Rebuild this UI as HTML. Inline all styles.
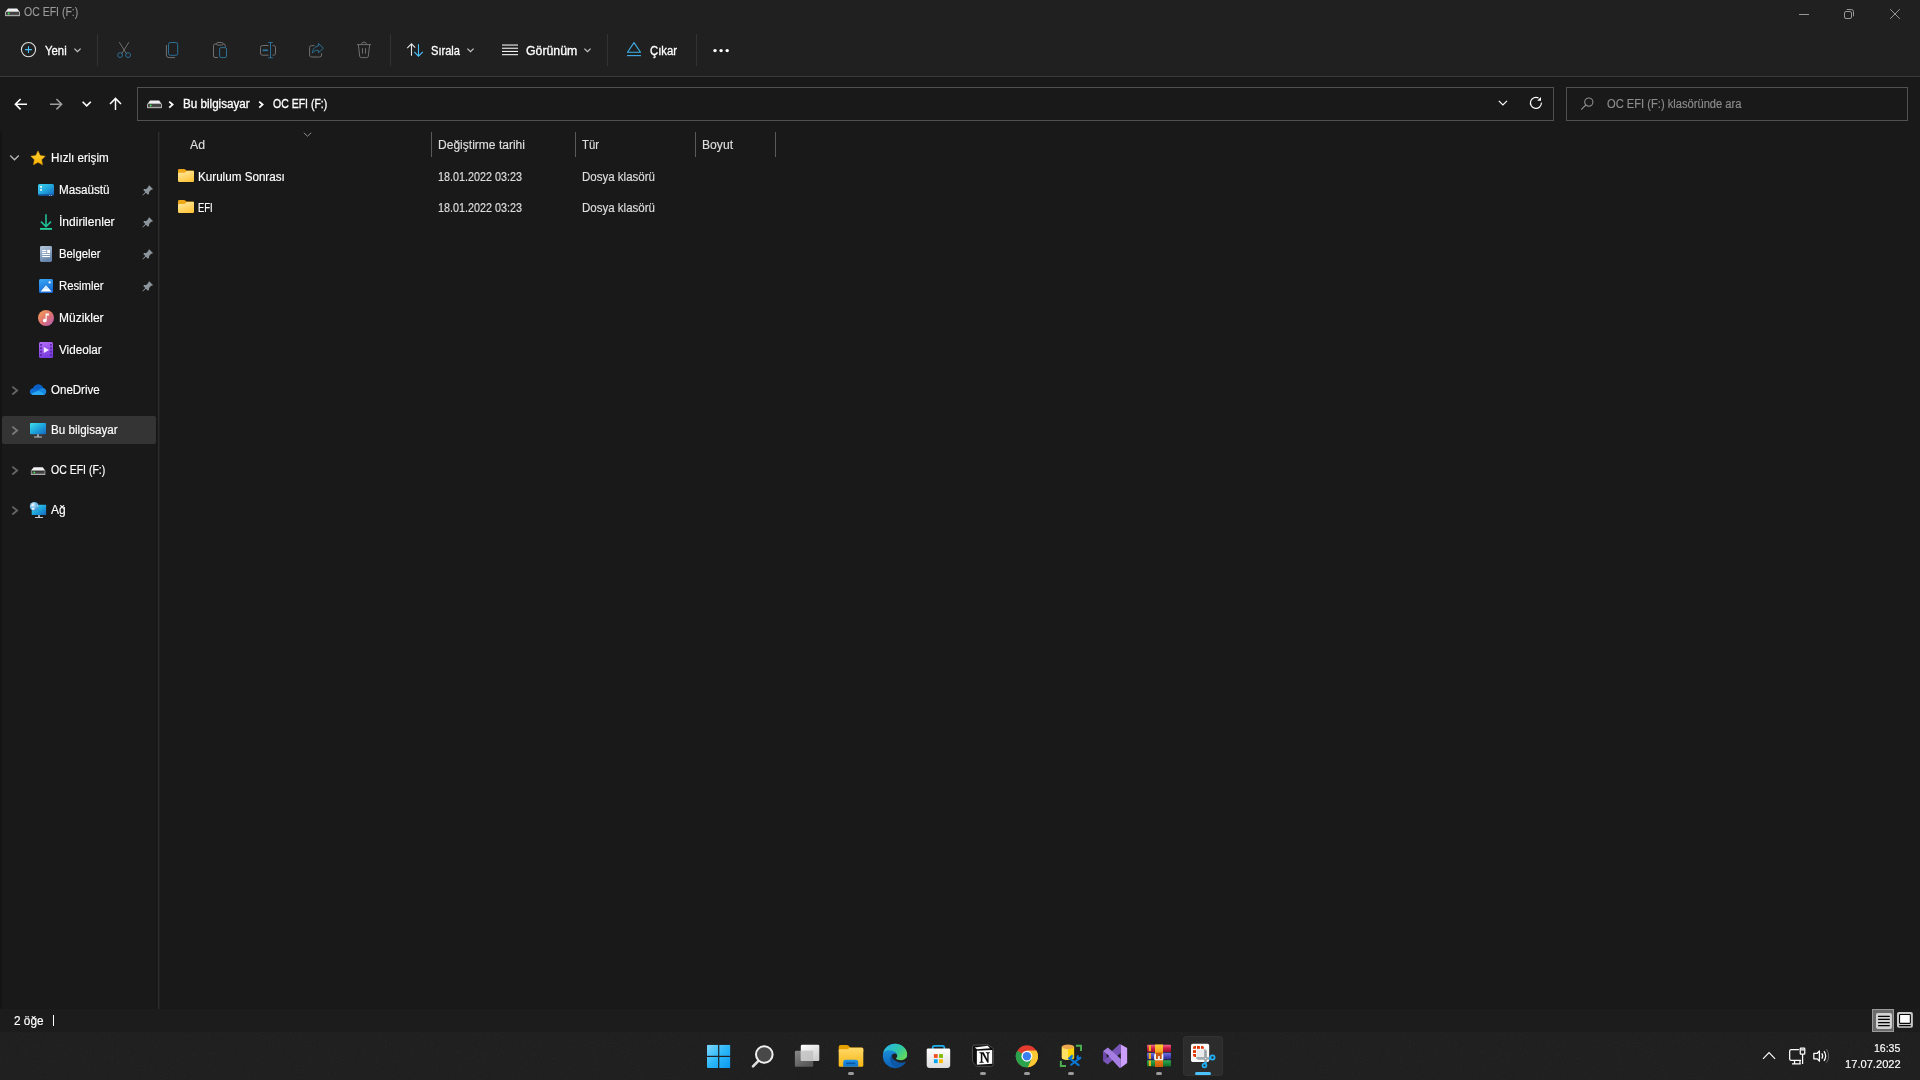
<!DOCTYPE html>
<html lang="tr">
<head>
<meta charset="utf-8">
<title>OC EFI (F:)</title>
<style>
html,body{margin:0;padding:0;}
body{width:1920px;height:1080px;overflow:hidden;background:#191919;position:relative;
  font-family:"Liberation Sans",sans-serif;font-size:12px;color:#fff;}
.a{position:absolute;}
.t{position:absolute;white-space:nowrap;font-size:12px;line-height:16px;color:#fff;
  transform-origin:0 50%;display:block;}
.t{-webkit-text-stroke:0.16px currentColor;}
.t.tb{-webkit-text-stroke:0.3px currentColor;}
.t.gray{color:#9a9a9a;-webkit-text-stroke:0.1px currentColor;}
.t.srch{color:#8c8c8c;}
.t.hdr{color:#dedede;}
.t.cell{color:#dedede;}
.t.clk{font-size:11.6px;}
svg{position:absolute;overflow:visible;}
/* regions */
#top{left:0;top:0;width:1920px;height:76px;background:#202020;}
#topline{left:0;top:76px;width:1920px;height:1px;background:#3a3a3a;}
#edge{left:0;top:132px;width:2px;height:877px;background:#141414;}
#addr{left:137px;top:87px;width:1415px;height:32px;border:1px solid #515151;}
#search{left:1566px;top:87px;width:340px;height:32px;border:1px solid #515151;}
#sidediv{left:158px;top:132px;width:1px;height:877px;background:#2c2c2c;box-shadow:1px 0 0 #202020,-2px 0 0 #161616;}
#sel{left:2px;top:416px;width:154px;height:28px;background:#343434;border-radius:2px;}
.sep{position:absolute;top:34px;width:1px;height:32px;background:#333333;}
.colsep{position:absolute;top:132px;width:1px;height:25px;background:#5a5a5a;}
#status{left:0;top:1009px;width:1920px;height:23px;background:#1c1c1c;}
#task{left:0;top:1032px;width:1920px;height:48px;background:#1f1f1f;}
.ind{top:1072px;width:6px;height:3px;border-radius:1.5px;background:#9b9b9b;}
</style>
</head>
<body>
<!-- ===== backgrounds ===== -->
<div class="a" id="top"></div>
<div class="a" id="topline"></div>
<div class="a" id="edge"></div>
<div class="a" id="addr"></div>
<div class="a" id="search"></div>
<div class="a" id="sidediv"></div>
<div class="a" id="sel"></div>
<div class="sep" style="left:97px"></div>
<div class="sep" style="left:390px"></div>
<div class="sep" style="left:607px"></div>
<div class="sep" style="left:696px"></div>
<div class="colsep" style="left:431px"></div>
<div class="colsep" style="left:575px"></div>
<div class="colsep" style="left:695px"></div>
<div class="colsep" style="left:775px"></div>
<div class="a" id="status"></div>
<div class="a" id="task"></div>
<svg style="left:0px;top:1032px" width="1920" height="48"><filter id="nz" x="0" y="0" width="100%" height="100%"><feTurbulence type="fractalNoise" baseFrequency="0.75" numOctaves="2" seed="7" result="n"/><feColorMatrix in="n" type="matrix" values="0 0 0 0 1  0 0 0 0 1  0 0 0 0 1  0.6 0.6 0.6 0 -0.82"/></filter><rect width="1920" height="48" fill="#fff" filter="url(#nz)" opacity="0.06"/></svg>

<!-- ===== text ===== -->
<span class="t gray" style="left:24.1px;top:3.84px;transform:scaleX(0.8758)">OC EFI (F:)</span>
<span class="t tb" style="left:45px;top:42.64px;transform:scaleX(0.9467)">Yeni</span>
<span class="t tb" style="left:431px;top:42.64px;transform:scaleX(0.9248)">Sırala</span>
<span class="t tb" style="left:526px;top:42.64px;transform:scaleX(1.0254)">Görünüm</span>
<span class="t tb" style="left:650px;top:42.64px;transform:scaleX(0.9417)">Çıkar</span>
<span class="t tb" style="left:183.3px;top:95.84px;transform:scaleX(0.9708)">Bu bilgisayar</span>
<span class="t tb" style="left:273.3px;top:95.84px;transform:scaleX(0.8742)">OC EFI (F:)</span>
<span class="t srch" style="left:1607.2px;top:95.84px;transform:scaleX(0.9294)">OC EFI (F:) klasöründe ara</span>

<span class="t " style="left:51.3px;top:149.84px;transform:scaleX(0.9723)">Hızlı erişim</span>
<span class="t " style="left:59.4px;top:181.64px;transform:scaleX(0.9725)">Masaüstü</span>
<span class="t " style="left:59.4px;top:213.64px;transform:scaleX(1.0043)">İndirilenler</span>
<span class="t " style="left:59.4px;top:245.64px;transform:scaleX(0.9448)">Belgeler</span>
<span class="t " style="left:59.4px;top:277.64px;transform:scaleX(0.9420)">Resimler</span>
<span class="t " style="left:59.4px;top:309.64px;transform:scaleX(0.9984)">Müzikler</span>
<span class="t " style="left:59.4px;top:341.64px;transform:scaleX(0.9723)">Videolar</span>
<span class="t " style="left:51.3px;top:381.84px;transform:scaleX(0.9608)">OneDrive</span>
<span class="t " style="left:51.3px;top:421.84px;transform:scaleX(0.9708)">Bu bilgisayar</span>
<span class="t " style="left:51.3px;top:461.84px;transform:scaleX(0.8758)">OC EFI (F:)</span>
<span class="t " style="left:51.3px;top:501.84px;transform:scaleX(1.0009)">Ağ</span>

<span class="t hdr" style="left:190px;top:137.14px;transform:scaleX(1.0213)">Ad</span>
<span class="t hdr" style="left:438px;top:137.14px;transform:scaleX(1.0034)">Değiştirme tarihi</span>
<span class="t hdr" style="left:582px;top:137.14px;transform:scaleX(0.9444)">Tür</span>
<span class="t hdr" style="left:702px;top:137.14px;transform:scaleX(1.0102)">Boyut</span>
<span class="t " style="left:198.2px;top:168.84px;transform:scaleX(0.9712)">Kurulum Sonrası</span>
<span class="t " style="left:198.2px;top:199.84px;transform:scaleX(0.7873)">EFI</span>
<span class="t cell" style="left:438px;top:168.84px;transform:scaleX(0.8991)">18.01.2022 03:23</span>
<span class="t cell" style="left:438px;top:199.84px;transform:scaleX(0.8991)">18.01.2022 03:23</span>
<span class="t cell" style="left:582px;top:168.84px;transform:scaleX(0.9601)">Dosya klasörü</span>
<span class="t cell" style="left:582px;top:199.84px;transform:scaleX(0.9601)">Dosya klasörü</span>

<span class="t " style="left:14px;top:1012.84px;transform:scaleX(0.9823)">2 öğe</span>
<span class="t clk" style="left:1874px;top:1039.88px;transform:scaleX(0.9064)">16:35</span>
<span class="t clk" style="left:1844.6px;top:1056.08px;transform:scaleX(0.9598)">17.07.2022</span>

<!-- ===== ICONS: titlebar/toolbar ===== -->
<!-- title drive icon -->
<svg width="0" height="0" style="left:0;top:0"><defs>
  <linearGradient id="gDrvP" x1="0" y1="0" x2="0" y2="1"><stop offset="0" stop-color="#2c2c2c"/><stop offset="1" stop-color="#585858"/></linearGradient>
  <symbol id="drv" viewBox="0 0 635 330">
    <path d="M130 5 H515 L615 140 H20 Z" fill="#f0f0f3"/>
    <path d="M0 150 Q0 138 12 138 H623 Q635 138 635 150 V310 Q635 330 615 330 H20 Q0 330 0 310 Z" fill="#acacac"/>
    <rect x="42" y="160" width="551" height="122" fill="url(#gDrvP)"/>
    <circle cx="155" cy="216" r="38" fill="#3bf04a"/>
  </symbol>
</defs></svg>
<svg style="left:5px;top:7px" width="15" height="9" viewBox="0 -35.12 675.53 405.18"><use href="#drv"/></svg>
<!-- window controls -->
<svg style="left:1799px;top:14px" width="10" height="1" viewBox="0 0 10 1"><rect width="10" height="1" fill="#979797"/></svg>
<svg style="left:1844px;top:9px" width="10" height="10" viewBox="0 0 10 10" fill="none" stroke="#979797" stroke-width="1">
  <rect x="0.5" y="2.5" width="7" height="7" rx="1.5"/>
  <path d="M2.7 0.5 H7.3 A2.2 2.2 0 0 1 9.5 2.7 V7.3"/>
</svg>
<svg style="left:1890px;top:9px" width="10" height="10" viewBox="0 0 10 10" stroke="#979797" stroke-width="1" fill="none">
  <path d="M0.2 0.2 L9.8 9.8 M9.8 0.2 L0.2 9.8"/>
</svg>
<!-- Yeni: circle plus -->
<svg style="left:20px;top:41px" width="17" height="17" viewBox="0 0 17 17" fill="none">
  <circle cx="8.5" cy="8.6" r="7.1" stroke="#e0e0e0" stroke-width="1.1"/>
  <path d="M8.5 5.2 V12 M5.1 8.6 H11.9" stroke="#4cc2ff" stroke-width="1.1"/>
</svg>
<!-- chevrons -->
<svg style="left:74px;top:48px" width="7" height="5" viewBox="0 0 7 5" fill="none" stroke="#c4c4c4" stroke-width="1.25"><path d="M0.4 0.6 L3.5 3.7 L6.6 0.6"/></svg>
<svg style="left:467px;top:48px" width="7" height="5" viewBox="0 0 7 5" fill="none" stroke="#c4c4c4" stroke-width="1.25"><path d="M0.4 0.6 L3.5 3.7 L6.6 0.6"/></svg>
<svg style="left:584px;top:48px" width="7" height="5" viewBox="0 0 7 5" fill="none" stroke="#c4c4c4" stroke-width="1.25"><path d="M0.4 0.6 L3.5 3.7 L6.6 0.6"/></svg>
<!-- cut -->
<svg style="left:116px;top:41px" width="16" height="18" viewBox="0 0 16 18" fill="none" stroke-width="1">
  <path d="M3.3 1.2 L10.6 12.9 M12.9 1.2 L5.6 12.9" stroke="#707070"/>
  <circle cx="4.1" cy="14.1" r="2.4" stroke="#2c7097"/>
  <circle cx="12.1" cy="14.1" r="2.4" stroke="#2c7097"/>
</svg>
<!-- copy -->
<svg style="left:165px;top:41px" width="14" height="18" viewBox="0 0 14 18" fill="none" stroke-width="1">
  <path d="M1.4 4 V14 A2.6 2.6 0 0 0 4 16.6 H10" stroke="#707070"/>
  <rect x="3.5" y="1.5" width="9.2" height="12.8" rx="1.8" stroke="#2c7097"/>
</svg>
<!-- paste -->
<svg style="left:212px;top:41px" width="16" height="18" viewBox="0 0 16 18" fill="none" stroke-width="1">
  <path d="M6 16.5 H3 A1.5 1.5 0 0 1 1.5 15 V4.5 A1.5 1.5 0 0 1 3 3 H4.5 M11 3 H11.8 A1.5 1.5 0 0 1 13.3 4.5 V6" stroke="#707070"/>
  <rect x="4.5" y="1.5" width="6.5" height="2.6" rx="1.3" stroke="#707070"/>
  <rect x="7.6" y="6.6" width="6.9" height="10" rx="1.5" stroke="#2c7097"/>
</svg>
<!-- rename -->
<svg style="left:259px;top:41px" width="18" height="18" viewBox="0 0 18 18" fill="none" stroke-width="1">
  <path d="M9.5 4.5 H3.5 A2 2 0 0 0 1.5 6.5 V12.2 A2 2 0 0 0 3.5 14.2 H9.5 M13.5 4.5 H14.5 A2 2 0 0 1 16.5 6.5 V12.2 A2 2 0 0 1 14.5 14.2 H13.5" stroke="#707070"/>
  <path d="M9.2 1.5 H13.8 M9.2 16.8 H13.8 M11.5 1.5 V16.8" stroke="#2c7097"/>
  <path d="M3.6 9.3 H9" stroke="#2c7097" stroke-width="1.8"/>
</svg>
<!-- share -->
<svg style="left:308px;top:41px" width="17" height="18" viewBox="0 0 17 18" fill="none" stroke-width="1">
  <path d="M6.5 4.6 H3.6 A2 2 0 0 0 1.6 6.6 V14 A2 2 0 0 0 3.6 16 H11.6 A2 2 0 0 0 13.6 14 V12.2" stroke="#707070"/>
  <path d="M10.4 2.4 L15.4 7.2 L10.4 11.8 V9.3 C7.8 9.1 5.6 10 4.4 12.1 C4.6 8.4 6.8 5.4 10.4 5.1 Z" stroke="#2c7097" stroke-linejoin="round"/>
</svg>
<!-- delete -->
<svg style="left:356px;top:41px" width="16" height="18" viewBox="0 0 16 18" fill="none" stroke="#707070" stroke-width="1">
  <path d="M1 3.6 H15 M5.6 3.4 A2.4 2.4 0 0 1 10.4 3.4 M2.4 3.8 L3.7 15.2 A1.6 1.6 0 0 0 5.3 16.6 H10.7 A1.6 1.6 0 0 0 12.3 15.2 L13.6 3.8 M6.5 7.2 V12.6 M9.5 7.2 V12.6"/>
</svg>
<!-- sort -->
<svg style="left:406px;top:42px" width="18" height="16" viewBox="0 0 18 16" fill="none" stroke-width="1.1">
  <path d="M5.5 13.8 V2 M1.2 6.2 L5.5 1.9 L9.2 5.6" stroke="#e6e6e6"/>
  <path d="M12.5 2.2 V14 M8.3 9.9 L12.5 14.1 L16.8 9.8" stroke="#4cc2ff"/>
</svg>
<!-- view (4 lines) -->
<svg style="left:502px;top:44px" width="16" height="12" viewBox="0 0 16 12">
  <rect x="0" y="0.5" width="16" height="1.1" fill="#f0f0f0"/>
  <rect x="0" y="3.7" width="16" height="1.1" fill="#f0f0f0"/>
  <rect x="0" y="6.9" width="16" height="1.1" fill="#f0f0f0"/>
  <rect x="0" y="10.1" width="16" height="1.1" fill="#f0f0f0"/>
</svg>
<!-- eject -->
<svg style="left:626px;top:41px" width="16" height="16" viewBox="0 0 16 16" fill="none" stroke="#3fb0ea" stroke-width="1.1">
  <path d="M8 1.6 L1.5 11.3 H14.5 Z" stroke-linejoin="round"/>
  <path d="M1 14.6 H15"/>
</svg>
<!-- more dots -->
<svg style="left:713px;top:48px" width="17" height="5" viewBox="0 0 17 5" fill="#ffffff">
  <circle cx="2" cy="2.6" r="1.7"/><circle cx="8.1" cy="2.6" r="1.7"/><circle cx="14.2" cy="2.6" r="1.7"/>
</svg>


<!-- ===== ICONS: nav ===== -->
<!-- back -->
<svg style="left:14px;top:98px" width="14" height="12" viewBox="0 0 14 12" fill="none" stroke="#ffffff" stroke-width="1.6">
  <path d="M13 6.2 H1.6 M6.6 1 L1.4 6.2 L6.6 11.4"/>
</svg>
<!-- forward -->
<svg style="left:49px;top:98px" width="14" height="12" viewBox="0 0 14 12" fill="none" stroke="#9d9d9d" stroke-width="1.6">
  <path d="M1 6.2 H12.4 M7.4 1 L12.6 6.2 L7.4 11.4"/>
</svg>
<!-- recent chevron -->
<svg style="left:82px;top:101px" width="10" height="6" viewBox="0 0 10 6" fill="none" stroke="#ffffff" stroke-width="1.6">
  <path d="M0.6 0.7 L4.7 4.8 L8.8 0.7"/>
</svg>
<!-- up -->
<svg style="left:109px;top:97px" width="13" height="14" viewBox="0 0 13 14" fill="none" stroke="#ffffff" stroke-width="1.45">
  <path d="M6.5 13 V1.6 M1 7 L6.5 1.4 L12 7"/>
</svg>
<!-- addr drive -->
<svg style="left:147px;top:99px" width="15" height="9" viewBox="0 -35.12 675.53 405.18"><use href="#drv"/></svg>
<!-- breadcrumb chevrons -->
<svg style="left:168px;top:100px" width="6" height="8" viewBox="0 0 6 8" fill="none" stroke="#ffffff" stroke-width="1.8"><path d="M1.2 1.55 L4.6 4.55 L1.2 7.55"/></svg>
<svg style="left:258px;top:100px" width="6" height="8" viewBox="0 0 6 8" fill="none" stroke="#ffffff" stroke-width="1.8"><path d="M1.2 1.55 L4.6 4.55 L1.2 7.55"/></svg>
<!-- addr dropdown chevron -->
<svg style="left:1498px;top:100px" width="10" height="6" viewBox="0 0 10 6" fill="none" stroke="#ffffff" stroke-width="1.2">
  <path d="M0.8 0.9 L4.9 4.9 L9 0.9"/>
</svg>
<!-- refresh -->
<svg style="left:1529px;top:96px" width="14" height="14" viewBox="0 0 14 14" fill="none" stroke="#ffffff" stroke-width="1.2">
  <path d="M12.4 6.6 A5.5 5.5 0 1 1 9.6 2.1"/>
  <path d="M12 1 V4.8 H8.2 Z" fill="#ffffff" stroke="none"/>
</svg>
<!-- search magnifier -->
<svg style="left:1580px;top:97px" width="14" height="14" viewBox="0 0 14 14" fill="none" stroke="#8c8c8c" stroke-width="1.1">
  <circle cx="8.8" cy="5.1" r="4.1"/>
  <path d="M5.8 8 L1.2 12.7"/>
</svg>


<!-- ===== ICONS: sidebar ===== -->
<svg width="0" height="0" style="left:0;top:0">
  <defs>
    <linearGradient id="gStar" x1="0" y1="0" x2="0" y2="1"><stop offset="0" stop-color="#ffd23a"/><stop offset="1" stop-color="#fdb400"/></linearGradient>
    <linearGradient id="gDesk" x1="0" y1="0" x2="1" y2="1"><stop offset="0" stop-color="#3fd3ee"/><stop offset="0.5" stop-color="#22a6dc"/><stop offset="1" stop-color="#1563bc"/></linearGradient>
    <linearGradient id="gDown" x1="0" y1="0" x2="0" y2="1"><stop offset="0" stop-color="#35d28f"/><stop offset="0.7" stop-color="#17a99e"/><stop offset="1" stop-color="#25cf9a"/></linearGradient>
    <linearGradient id="gDoc" x1="0" y1="0" x2="0.4" y2="1"><stop offset="0" stop-color="#b9c9dc"/><stop offset="1" stop-color="#6584ab"/></linearGradient>
    <linearGradient id="gPic" x1="0" y1="0" x2="0.3" y2="1"><stop offset="0" stop-color="#3aa9f6"/><stop offset="1" stop-color="#166bd6"/></linearGradient>
    <linearGradient id="gMus" x1="0.1" y1="0.1" x2="0.9" y2="0.95"><stop offset="0" stop-color="#f39a58"/><stop offset="0.55" stop-color="#db6f74"/><stop offset="1" stop-color="#b85fb4"/></linearGradient>
    <linearGradient id="gVid" x1="0" y1="0" x2="0.3" y2="1"><stop offset="0" stop-color="#b66cf6"/><stop offset="1" stop-color="#7a3ee0"/></linearGradient>
    <linearGradient id="gMon" x1="0" y1="0" x2="1" y2="1"><stop offset="0" stop-color="#3fe0ea"/><stop offset="0.5" stop-color="#1fa6dc"/><stop offset="1" stop-color="#1466c0"/></linearGradient>
    <linearGradient id="gCloud" x1="0" y1="0" x2="0" y2="1"><stop offset="0" stop-color="#0f5fb6"/><stop offset="1" stop-color="#1e96e6"/></linearGradient>
    <radialGradient id="gGlobe" cx="0.35" cy="0.35" r="0.8"><stop offset="0" stop-color="#d8f0fb"/><stop offset="0.5" stop-color="#6bb8e6"/><stop offset="1" stop-color="#2a7fc4"/></radialGradient>
  </defs>
</svg>
<!-- quick access chevron down -->
<svg style="left:9px;top:154px" width="11" height="8" viewBox="0 0 11 8" fill="none" stroke="#b4b4b4" stroke-width="1.4"><path d="M1.2 1.4 L5.5 5.8 L9.8 1.4"/></svg>
<!-- star -->
<svg style="left:30px;top:150px" width="16" height="16" viewBox="0 0 16 16">
  <path d="M8 0.9 L10.2 5.5 L15.2 6.2 L11.6 9.7 L12.5 14.8 L8 12.3 L3.5 14.8 L4.4 9.7 L0.8 6.2 L5.8 5.5 Z" fill="url(#gStar)" stroke="#f0a000" stroke-width="0.5" stroke-linejoin="round"/>
</svg>
<!-- desktop -->
<svg style="left:38px;top:184px" width="16" height="12" viewBox="0 0 16 12">
  <rect x="0" y="0" width="16" height="11.4" rx="1.6" fill="url(#gDesk)"/>
  <rect x="0" y="10.2" width="16" height="1.2" rx="0.6" fill="#114f9e"/>
  <rect x="2.1" y="2.1" width="1.9" height="1.6" fill="#f4fbff"/>
  <rect x="2.1" y="5.1" width="1.9" height="1.6" fill="#f4fbff"/>
  <rect x="11.2" y="10.9" width="0.9" height="0.8" fill="#cfe6f5"/><rect x="12.9" y="10.9" width="0.9" height="0.8" fill="#cfe6f5"/>
</svg>
<!-- downloads -->
<svg style="left:40px;top:214px" width="12" height="16" viewBox="0 0 12 16" fill="none" stroke="url(#gDown)" stroke-width="1.6">
  <path d="M6 0.2 V12.2 M1 7.6 L6 12.6 L11 7.6" stroke="#21bd97"/>
  <path d="M0 14.9 H12" stroke="#25cf9a" stroke-width="1.8"/>
</svg>
<!-- documents -->
<svg style="left:40px;top:246px" width="12" height="16" viewBox="0 0 12 16">
  <rect x="0" y="0" width="12" height="16" rx="1.4" fill="url(#gDoc)"/>
  <rect x="2.2" y="4" width="4" height="1.1" fill="#fff"/>
  <rect x="2.2" y="5.9" width="4" height="1.1" fill="#fff"/>
  <rect x="7.2" y="3.8" width="2.8" height="3.2" fill="#fff"/>
  <rect x="2.2" y="7.9" width="7.8" height="1.1" fill="#fff"/>
  <rect x="2.2" y="10" width="7.8" height="1.1" fill="#fff"/>
</svg>
<!-- pictures -->
<svg style="left:39px;top:279px" width="14" height="14" viewBox="0 0 14 14">
  <rect x="0" y="0" width="14" height="14" rx="1.5" fill="url(#gPic)"/>
  <path d="M1.6 12.6 L7 6.4 L12.6 12.6 Z" fill="#fff"/>
  <path d="M3.6 10.6 L7 6.6 L10.6 10.6 Q7 9.2 3.6 10.6 Z" fill="#d6ebff"/>
  <circle cx="10.6" cy="3.4" r="1.1" fill="#fff"/>
</svg>
<!-- music -->
<svg style="left:38px;top:310px" width="16" height="16" viewBox="0 0 16 16">
  <circle cx="8" cy="8" r="8" fill="url(#gMus)"/>
  <path d="M7.6 3.6 H10.9 V5.4 H8.7 V10.6 A1.9 1.7 0 1 1 7.6 9.1 Z" fill="#fff"/>
</svg>
<!-- videos -->
<svg style="left:39px;top:342px" width="14" height="16" viewBox="0 0 14 16">
  <rect x="0" y="0" width="14" height="16" rx="1.5" fill="url(#gVid)"/>
  <g fill="#4a1f9a">
    <rect x="1.2" y="2" width="1.6" height="1.7"/><rect x="1.2" y="5.4" width="1.6" height="1.7"/><rect x="1.2" y="8.8" width="1.6" height="1.7"/><rect x="1.2" y="12.2" width="1.6" height="1.7"/>
    <rect x="11.2" y="2" width="1.6" height="1.7"/><rect x="11.2" y="5.4" width="1.6" height="1.7"/><rect x="11.2" y="8.8" width="1.6" height="1.7"/><rect x="11.2" y="12.2" width="1.6" height="1.7"/>
  </g>
  <path d="M4.8 4.9 L10 8 L4.8 11.1 Z" fill="#f2e8ff"/>
</svg>
<!-- pins -->
<svg style="left:142px;top:185px" width="12" height="11" viewBox="0 0 12 11"><path id="pin" d="M7.2 0.3 L10.9 4 L9.9 4.9 L9.3 4.6 L7.1 6.9 L7 9 L6 9.8 L3.9 7.7 L0.9 10.6 L0.4 10.1 L3.3 7.1 L1.3 5 L2.1 4.1 L4.2 4 L6.5 1.8 L6.2 1.2 Z" fill="#8b939b"/></svg>
<svg style="left:142px;top:217px" width="12" height="11" viewBox="0 0 12 11"><use href="#pin"/></svg>
<svg style="left:142px;top:249px" width="12" height="11" viewBox="0 0 12 11"><use href="#pin"/></svg>
<svg style="left:142px;top:281px" width="12" height="11" viewBox="0 0 12 11"><use href="#pin"/></svg>
<!-- right chevrons -->
<svg style="left:11px;top:385px" width="8" height="11" viewBox="0 0 8 11" fill="none" stroke="#666666" stroke-width="1.75"><path d="M1.3 1.6 L6.2 5.5 L1.3 9.5"/></svg>
<svg style="left:11px;top:425px" width="8" height="11" viewBox="0 0 8 11" fill="none" stroke="#7a7a7a" stroke-width="1.75"><path d="M1.3 1.6 L6.2 5.5 L1.3 9.5"/></svg>
<svg style="left:11px;top:465px" width="8" height="11" viewBox="0 0 8 11" fill="none" stroke="#666666" stroke-width="1.75"><path d="M1.3 1.6 L6.2 5.5 L1.3 9.5"/></svg>
<svg style="left:11px;top:505px" width="8" height="11" viewBox="0 0 8 11" fill="none" stroke="#666666" stroke-width="1.75"><path d="M1.3 1.6 L6.2 5.5 L1.3 9.5"/></svg>
<!-- onedrive cloud -->
<svg style="left:29px;top:384px" width="18" height="12" viewBox="857.2 274.3 617.22 411.48">
  <path d="M1010 655 C930 655 885 600 885 540 C885 470 940 425 1000 420 C1030 340 1100 295 1175 295 C1260 295 1320 350 1340 410 C1400 420 1445 470 1445 535 C1445 600 1400 655 1330 655 Z" fill="#0f6cd2"/>
  <path d="M1000 420 C1030 340 1100 295 1175 295 C1260 295 1320 350 1340 410 C1300 405 1260 420 1225 450 L1120 470 C1090 440 1045 420 1000 420 Z" fill="#0a5fc4"/>
  <path d="M1340 410 C1400 420 1445 470 1445 535 C1445 580 1425 615 1395 635 L1180 500 C1225 440 1285 405 1340 410 Z" fill="#1787e0"/>
  <path d="M930 600 C960 640 990 655 1010 655 H1330 C1360 655 1385 645 1400 630 L1185 495 Z" fill="#28a8f0"/>
</svg>
<!-- this pc -->
<svg style="left:30px;top:423px" width="16" height="15" viewBox="0 0 16 15">
  <rect x="0" y="0" width="16" height="11.2" rx="0.8" fill="url(#gMon)"/>
  <rect x="7" y="11.2" width="2" height="2.4" fill="#9aa3ab"/>
  <rect x="4" y="13.4" width="8" height="1.2" rx="0.4" fill="#c3c9ce"/>
</svg>
<!-- drive -->
<svg style="left:30px;top:466px" width="15" height="9" viewBox="-26.64 -26.58 666.08 398.66"><use href="#drv"/></svg>
<!-- network -->
<svg style="left:29px;top:502px" width="18" height="17" viewBox="-0.5 0 18 17">
  <rect x="2.2" y="2.75" width="14.4" height="10.35" rx="0.5" fill="url(#gMon)"/>
  <rect x="8.5" y="13.1" width="2" height="2" fill="#aab2ba"/>
  <rect x="5.4" y="14.9" width="8.2" height="1.1" rx="0.4" fill="#c9ced4"/>
  <circle cx="4.8" cy="4.4" r="4.5" fill="url(#gGlobe)"/>
  <path d="M1.6 3.4 Q2.8 1.2 5 1 Q4.6 2.8 3 4 Z M2 6 Q3.8 5.2 5.4 6.8 Q4.4 8.2 3 8 Z M7.8 2.6 Q9.2 4 8.6 5.6 Q7.6 4.6 7.8 2.6 Z" fill="#eef8fd" opacity="0.9"/>
</svg>

<!-- ===== ICONS: content ===== -->
<svg width="0" height="0" style="left:0;top:0"><defs>
  <linearGradient id="gFold" x1="0.2" y1="0" x2="0.7" y2="1"><stop offset="0" stop-color="#ffe79e"/><stop offset="1" stop-color="#ffc53a"/></linearGradient>
</defs></svg>
<!-- sort indicator -->
<svg style="left:303px;top:132px" width="9" height="5" viewBox="0 0 9 5" fill="none" stroke="#8f8f8f" stroke-width="1"><path d="M0.8 0.8 L4.5 4.2 L8.2 0.8"/></svg>
<!-- folders -->
<svg style="left:178px;top:168px" width="16" height="15" viewBox="0 -0.9 16 15">
  <path id="fb" d="M1.4 0 H6 Q6.8 0 7.3 0.6 L8.4 1.6 H14.8 Q16 1.6 16 2.8 V5 H0 V1.4 Q0 0 1.4 0 Z" fill="#efa81a"/>
  <path id="ff" d="M0 4.9 Q0 3.9 1 3.9 H6 Q6.8 3.9 7.3 3.4 L8 2.7 Q8.6 2.1 9.4 2.1 H15 Q16 2.1 16 3.1 V11.8 Q16 13 14.8 13 H1.2 Q0 13 0 11.8 Z" fill="url(#gFold)"/>
</svg>
<svg style="left:178px;top:200px" width="16" height="14" viewBox="0 0 16 14"><use href="#fb"/><use href="#ff"/></svg>

<!-- ===== ICONS: status + taskbar ===== -->
<svg width="0" height="0" style="left:0;top:0"><defs>
  <linearGradient id="gWin" x1="0" y1="0" x2="1" y2="1"><stop offset="0" stop-color="#7fd8fc"/><stop offset="0.5" stop-color="#2bb7f8"/><stop offset="1" stop-color="#0b98f0"/></linearGradient>
  <linearGradient id="gTvF" x1="0" y1="0" x2="0.6" y2="1"><stop offset="0" stop-color="#ffffff"/><stop offset="1" stop-color="#cfcfcf"/></linearGradient>
  <linearGradient id="gTvB" x1="0" y1="0" x2="0.6" y2="1"><stop offset="0" stop-color="#8a8a8a"/><stop offset="1" stop-color="#585858"/></linearGradient>
  <linearGradient id="gFe" x1="0" y1="0" x2="0" y2="1"><stop offset="0" stop-color="#ffd96a"/><stop offset="1" stop-color="#f8b712"/></linearGradient>
  <linearGradient id="gFeB" x1="0" y1="0" x2="0" y2="1"><stop offset="0" stop-color="#1f95ea"/><stop offset="1" stop-color="#0f6fc6"/></linearGradient>
  <linearGradient id="gEdge1" x1="0" y1="0" x2="0" y2="1"><stop offset="0" stop-color="#1f9ce6"/><stop offset="1" stop-color="#0c5fb4"/></linearGradient>
  <linearGradient id="gEdge2" x1="0" y1="0.2" x2="1" y2="0.8"><stop offset="0" stop-color="#27b6ec"/><stop offset="0.55" stop-color="#2fc6a6"/><stop offset="1" stop-color="#6cdc4e"/></linearGradient>
  <linearGradient id="gBag" x1="0" y1="0" x2="0" y2="1"><stop offset="0" stop-color="#ffffff"/><stop offset="1" stop-color="#dcdcdc"/></linearGradient>
  <linearGradient id="gCyl" x1="0" y1="0" x2="1" y2="0"><stop offset="0" stop-color="#ffe066"/><stop offset="0.5" stop-color="#ffd84a"/><stop offset="0.55" stop-color="#f7c200"/><stop offset="1" stop-color="#f2b900"/></linearGradient>
  <linearGradient id="gSnip" x1="0" y1="0" x2="1" y2="1"><stop offset="0" stop-color="#ffffff"/><stop offset="1" stop-color="#d9d9d9"/></linearGradient>
</defs></svg>

<!-- status bar: separator + view buttons -->
<div class="a" style="left:53px;top:1015px;width:1px;height:11px;background:#ffffff"></div>
<div class="a" style="left:1872px;top:1009px;width:22px;height:23px;background:#6b6b6b;box-shadow:inset 0 0 0 1px #9a9a9a"></div>
<svg style="left:1876px;top:1013px" width="16" height="16" viewBox="0 0 16 16">
  <rect x="0" y="0" width="15.9" height="15.9" rx="1.8" fill="#d3d3d3"/>
  <rect x="2" y="2.8" width="11.9" height="1.25" rx="0.5" fill="#050505"/><rect x="2" y="5.85" width="11.9" height="1.25" rx="0.5" fill="#050505"/><rect x="2" y="8.9" width="11.9" height="1.25" rx="0.5" fill="#050505"/><rect x="2" y="11.9" width="11.9" height="1.25" rx="0.5" fill="#050505"/>
</svg>
<svg style="left:1897px;top:1012px" width="16" height="16" viewBox="0 0 16 16">
  <rect x="0" y="0" width="15.85" height="15.85" rx="1.8" fill="#c9c9c9"/>
  <rect x="2.55" y="2.55" width="10.8" height="8.8" rx="0.6" fill="#ffffff" stroke="#050505" stroke-width="1.1"/>
  <rect x="2" y="12.9" width="11.9" height="1.25" rx="0.5" fill="#050505"/>
</svg>

<!-- active app highlight -->
<div class="a" style="left:1183px;top:1036px;width:40px;height:40px;border-radius:4px;background:#2c2c2c;box-shadow:inset 0 0 0 1px #323232"></div>

<!-- start -->
<svg style="left:707px;top:1044px" width="24" height="25" viewBox="0 -0.7 24 25">
  <mask id="mWin"><rect width="23.4" height="23.4" fill="#fff"/><rect x="11.1" y="0" width="1.2" height="23.4" fill="#000"/><rect x="0" y="11.1" width="23.4" height="1.2" fill="#000"/></mask>
  <rect width="23.4" height="23.4" rx="1" fill="url(#gWin)" mask="url(#mWin)"/>
</svg>
<!-- search -->
<svg style="left:751px;top:1044px" width="24" height="24" viewBox="0 0 24 24" fill="none">
  <path d="M7.4 16.8 L2 22.4" stroke="#dedede" stroke-width="2.6" stroke-linecap="round"/>
  <circle cx="13.3" cy="10.5" r="8.3" fill="#484848" stroke="#f2f2f2" stroke-width="2"/>
</svg>
<!-- task view -->
<svg style="left:794px;top:1044px" width="26" height="24" viewBox="0 0 26 24">
  <rect x="0.9" y="6.7" width="18.3" height="16" rx="1.2" fill="url(#gTvB)"/>
  <rect x="6.8" y="0.7" width="18.5" height="16.3" rx="1.2" fill="url(#gTvF)"/>
  <rect x="6.8" y="6.7" width="12.4" height="10.3" fill="#bdbdbd" opacity="0.75"/>
</svg>
<!-- file explorer -->
<svg style="left:838px;top:1044px" width="26" height="24" viewBox="0 0 26 24">
  <path d="M0.7 3 Q0.7 1 2.7 1 H8.8 Q9.8 1 10.6 1.8 L12.4 3.6 H23.4 Q25.3 3.6 25.3 5.6 V8 H0.7 Z" fill="#e6a100"/>
  <path d="M0.7 6.4 Q0.7 5.2 1.9 5.2 H9.4 Q10.2 5.2 10.8 4.6 L11.6 3.8 H24 Q25.3 3.8 25.3 5.1 V21.4 Q25.3 22.7 24 22.7 H2 Q0.7 22.7 0.7 21.4 Z" fill="url(#gFe)"/>
  <path d="M5.2 22.7 V18.2 Q5.2 15.8 7.6 15.8 H17.8 Q20.2 15.8 20.2 18.2 V22.7 Z" fill="url(#gFeB)"/>
  <rect x="8" y="18.4" width="9.4" height="1.5" rx="0.7" fill="#0b559f"/>
</svg>
<!-- edge -->
<svg style="left:877px;top:1038px" width="36" height="36" viewBox="0 0 1080 1080">
  <circle cx="540" cy="540" r="364" fill="url(#gEdge1)"/>
  <path d="M470 470 C400 520 380 620 410 720 C450 840 560 890 660 880 C760 860 830 790 860 720 C800 760 700 770 620 730 C540 690 480 620 470 470 Z" fill="#0d55a5"/>
  <path d="M450 545 C450 470 520 450 580 480 C625 510 612 585 572 612 C640 660 800 660 930 560 L930 760 L852 718 C760 760 640 745 540 672 C480 630 450 595 450 545 Z" fill="#202020"/>
  <path d="M180 470 C210 300 370 172 545 172 C770 172 905 340 905 480 C905 600 820 665 720 665 C650 665 590 640 570 612 C625 570 620 500 590 470 C560 400 470 365 340 365 C270 365 210 400 180 470 Z" fill="url(#gEdge2)"/>
</svg>
<!-- store -->
<svg style="left:926px;top:1044px" width="25" height="25" viewBox="-0.6 -0.4 25 25">
  <path d="M6.1 6.4 V3.2 Q6.1 1.4 7.9 1.4 H15.9 Q17.7 1.4 17.7 3.2 V6.4" fill="none" stroke="#20b0f2" stroke-width="1.7"/>
  <path d="M0.1 5.4 Q0.1 4 1.5 4 H22.2 Q23.6 4 23.6 5.4 V20.7 Q23.6 23.7 20.6 23.7 H3.1 Q0.1 23.7 0.1 20.7 Z" fill="url(#gBag)"/>
  <rect x="7.3" y="9.7" width="3.8" height="3.8" fill="#f25022"/><rect x="12.5" y="9.7" width="3.8" height="3.8" fill="#7fba00"/>
  <rect x="7.3" y="14.9" width="3.8" height="3.8" fill="#00a4ef"/><rect x="12.5" y="14.9" width="3.8" height="3.8" fill="#ffb900"/>
</svg>
<!-- notion -->
<svg style="left:965px;top:1038px" width="36" height="36" viewBox="0 0 1080 1080">
  <path d="M226 262 Q226 222 266 216 L660 200 Q690 198 712 214 L830 300 Q850 316 850 342 V790 Q850 848 792 850 L372 850 Q340 850 322 828 L240 726 Q226 708 226 684 Z" fill="#0d0d0d" stroke="#5c5c5c" stroke-width="24" stroke-linejoin="round"/>
  <path d="M290 285 L680 236 L752 310 L362 336 Z" fill="#fbfbfb"/>
  <path d="M356 386 L816 360 V770 L356 806 Z" fill="#fdfdfd"/>
  <path d="M430 430 H560 L668 640 V470 Q668 452 625 448 V425 H745 V448 Q708 452 708 470 V745 H672 L520 470 V700 Q520 718 560 722 V745 H432 V722 Q475 718 475 700 V472 Q475 452 430 452 Z" fill="#0c0c0c"/>
</svg>
<!-- chrome -->
<svg style="left:1015px;top:1044px" width="24" height="24" viewBox="-12.22 -12.52 24.637 24.637">
  <circle r="11.3" fill="#e33b2e"/>
  <path d="M-9.79 -5.65 A11.3 11.3 0 0 0 1.2 11.24 L4.85 2.8 L0 0 Z" fill="#2ba24c"/>
  <path d="M-9.79 -5.65 L-4.85 2.8 L0 5.6 L4.85 2.8 L1.2 11.24 A11.3 11.3 0 0 1 -9.79 -5.65 Z" fill="#2ba24c"/>
  <path d="M1.2 11.24 A11.3 11.3 0 0 0 9.79 -5.65 L0 -5.6 L4.85 2.8 Z" fill="#fcc934"/>
  <path d="M9.79 -5.65 H0 A5.6 5.6 0 0 1 4.85 2.8 L1.2 11.24 A11.3 11.3 0 0 0 9.79 -5.65 Z" fill="#fcc934"/>
  <circle r="5.6" fill="#ffffff"/>
  <circle r="4.3" fill="#3a7fee"/>
</svg>
<!-- sql/data tool -->
<svg style="left:1054px;top:1038px" width="36" height="36" viewBox="0 0 1080 1080">
  <path d="M235 265 V590 A185 70 0 0 0 605 590 V265 Z" fill="#ffd500"/>
  <path d="M235 265 V590 A185 70 0 0 0 420 660 V265 Z" fill="#ffe164"/>
  <ellipse cx="420" cy="265" rx="185" ry="70" fill="#eda84e"/>
  <path d="M655 232 H810 V390" fill="none" stroke="#4caf50" stroke-width="58"/>
  <path d="M205 685 V838 H360" fill="none" stroke="#4caf50" stroke-width="58"/>
  <path d="M470 610 L740 815 M790 590 L515 805" stroke="#0a78d4" stroke-width="60" stroke-linecap="round"/>
  <path d="M410 610 L540 495 L600 560 L470 670 Z" fill="#0a78d4"/>
  <path d="M735 505 A75 75 0 1 0 820 590 L770 585 L735 550 Z" fill="#0a78d4"/>
  <rect x="560" y="545" width="40" height="55" fill="#ffd500"/>
</svg>
<!-- visual studio -->
<svg style="left:1098px;top:1038px" width="36" height="36" viewBox="0 0 1080 1080">
  <path d="M150 692 L290 797 L685 445 V190 L648 183 L262 540 Z" fill="#7a55b8"/>
  <path d="M150 388 L262 478 V605 L150 692 Z" fill="#6c48aa"/>
  <path d="M150 388 L180 372 L295 283 L685 628 V893 L648 903 L262 478 Z" fill="#a67ee2"/>
  <path d="M266 482 L335 540 L266 600 Z" fill="#202020"/>
  <path d="M685 192 L875 303 V747 L685 893 Z" fill="#cd9ffc"/>
</svg>
<!-- winrar -->
<svg style="left:1142px;top:1038px" width="36" height="36" viewBox="0 0 1080 1080">
  <defs>
    <linearGradient id="gR1" x1="0" y1="0" x2="0" y2="1"><stop offset="0" stop-color="#f2668e"/><stop offset="0.45" stop-color="#d01d48"/><stop offset="1" stop-color="#98102e"/></linearGradient>
    <linearGradient id="gR2" x1="0" y1="0" x2="0" y2="1"><stop offset="0" stop-color="#7474e6"/><stop offset="0.5" stop-color="#4a4ac0"/><stop offset="1" stop-color="#2e2e90"/></linearGradient>
    <linearGradient id="gR3" x1="0" y1="0" x2="0" y2="1"><stop offset="0" stop-color="#34a85c"/><stop offset="0.5" stop-color="#1c8c3c"/><stop offset="1" stop-color="#106a28"/></linearGradient>
    <linearGradient id="gR4" x1="0" y1="0" x2="0" y2="1"><stop offset="0" stop-color="#fbd030"/><stop offset="0.4" stop-color="#f39a1c"/><stop offset="1" stop-color="#cf5a0c"/></linearGradient>
  </defs>
  <rect x="150" y="205" width="720" height="212" rx="24" fill="url(#gR1)"/>
  <rect x="150" y="440" width="720" height="202" rx="24" fill="url(#gR2)"/>
  <rect x="150" y="665" width="720" height="188" rx="24" fill="url(#gR3)"/>
  <rect x="205" y="215" width="64" height="180" fill="#f0b418"/><rect x="205" y="450" width="64" height="180" fill="#f0b418"/><rect x="205" y="675" width="64" height="165" fill="#f0b418"/>
  <rect x="390" y="195" width="240" height="675" fill="url(#gR4)"/>
  <rect x="365" y="480" width="275" height="190" rx="30" fill="#f6f6f6"/>
  <rect x="420" y="440" width="170" height="190" fill="#c8560c"/>
  <rect x="478" y="545" width="58" height="110" fill="#f0f0f0"/>
</svg>
<!-- snipping tool -->
<svg style="left:1186px;top:1038px" width="36" height="36" viewBox="0 0 1080 1080">
  <rect x="150" y="175" width="545" height="545" rx="50" fill="#fbfbfb"/>
  <rect x="320" y="340" width="300" height="300" fill="#e9eaeb"/>
  <g fill="#e03400">
    <path d="M210 325 V300 Q210 240 270 240 H300 V325 Z"/>
    <rect x="330" y="240" width="86" height="85"/>
    <path d="M450 240 H480 Q540 240 540 300 V325 H450 Z"/>
    <rect x="210" y="365" width="90" height="82"/>
    <path d="M210 482 H300 V570 H270 Q210 570 210 510 Z"/>
  </g>
  <path d="M545 335 Q625 335 625 415 V720 H545 Z" fill="#9aa1a7"/>
  <path d="M305 570 H690 V650 H385 Q305 650 305 570 Z" fill="#a4abb0"/>
  <circle cx="585" cy="612" r="16" fill="#f2f2f2"/>
  <circle cx="795" cy="585" r="62" fill="none" stroke="#1fb0f9" stroke-width="52"/>
  <path d="M690 570 H740 V650 H690 Z" fill="#1fb0f9"/>
  <circle cx="555" cy="825" r="58" fill="none" stroke="#1fb0f9" stroke-width="50"/>
  <path d="M545 720 H625 V770 H545 Z" fill="#1fb0f9"/>
</svg>
<!-- running indicators -->
<div class="a ind" style="left:848px"></div>
<div class="a ind" style="left:980px"></div>
<div class="a ind" style="left:1024px"></div>
<div class="a ind" style="left:1068px"></div>
<div class="a ind" style="left:1156px"></div>
<div class="a" style="left:1195px;top:1072px;width:16px;height:3px;border-radius:1.5px;background:#4cc2ff"></div>

<!-- tray -->
<svg style="left:1756px;top:1040px" width="80" height="32" viewBox="0 0 1920 768" fill="none" stroke="#ffffff" stroke-width="30">
  <path d="M168 452 L313 304 L458 452" stroke-width="27"/>
  <path d="M1030 228 H848 Q808 228 808 268 V448 Q808 488 848 488 H1080"/>
  <path d="M925 490 V570 M1055 490 V570 M865 570 H1075"/>
  <rect x="1062" y="197" width="108" height="142" rx="14"/>
  <path d="M1075 234 H1160 M1118 340 V578"/>
  <path d="M1388 318 H1470 L1522 262 V508 L1470 452 H1388 Z" stroke-linejoin="round"/>
  <path d="M1578 322 Q1622 385 1578 448"/>
  <path d="M1632 268 Q1712 385 1632 502"/>
  <path d="M1690 218 Q1800 385 1690 548" stroke="#6e6e6e" stroke-width="22"/>
</svg>

</body>
</html>
